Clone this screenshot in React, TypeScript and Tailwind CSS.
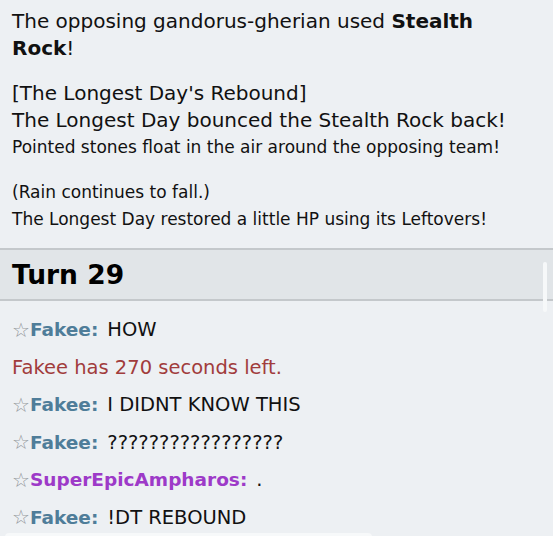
function Star() {
  return <span className="text-[#959a9e] font-normal text-[20px] leading-none">☆</span>;
}

function ChatLine({ name, color, msg }: { name: string; color: string; msg: string }) {
  return (
    <div className="flex items-center h-[37.5px]">
      <Star />
      <strong className={`${color} font-bold text-[18.5px]`}>{name}:</strong>
      <span className="ml-[9px] text-[#111]">{msg}</span>
    </div>
  );
}

export default function App() {
  return (
    <div
      className="relative w-[553px] h-[536px] overflow-hidden bg-[#edf0f3] text-[#111] text-[20px] leading-[27px]"
      style={{ fontFamily: '"DejaVu Sans", Verdana, sans-serif' }}
    >
      {/* BATTLE LOG */}
      <div className="px-3 pt-[8px]">
        <div>
          The opposing gandorus-gherian used <strong>Stealth Rock</strong>!
        </div>
        <div className="mt-[18px]">[The Longest Day's Rebound]</div>
        <div>The Longest Day bounced the Stealth Rock back!</div>
        <div className="text-[17px]">Pointed stones float in the air around the opposing team!</div>
        <div className="mt-[18px] text-[17px]">(Rain continues to fall.)</div>
        <div className="text-[17px]">The Longest Day restored a little HP using its Leftovers!</div>
      </div>

      {/* TURN HEADER */}
      <div className="mt-[15px] border-y-2 border-[#c4c8cb] bg-[#e1e5e8] px-3 h-[53px] flex items-center">
        <h2 className="text-[26.5px] font-bold text-black">Turn 29</h2>
      </div>

      {/* CHAT */}
      <div className="px-3 pt-[10px] text-[19.5px]">
        <ChatLine name="Fakee" color="text-[#4f7d99]" msg="HOW" />
        <div className="h-[37.5px] flex items-center text-[#a13c3c]">Fakee has 270 seconds left.</div>
        <ChatLine name="Fakee" color="text-[#4f7d99]" msg="I DIDNT KNOW THIS" />
        <ChatLine name="Fakee" color="text-[#4f7d99]" msg="?????????????????" />
        <ChatLine name="SuperEpicAmpharos" color="text-[#9d3ac8]" msg="." />
        <ChatLine name="Fakee" color="text-[#4f7d99]" msg="!DT REBOUND" />
      </div>

      {/* input box peeking at bottom */}
      <div className="absolute left-[5px] top-[533px] w-[367px] h-[20px] rounded-t bg-[#f7f9fa]" />

      {/* scrollbar */}
      <div className="absolute left-[543px] top-[262px] w-[4px] h-[50px] rounded-full bg-[#f6f8f9]" />
    </div>
  );
}
